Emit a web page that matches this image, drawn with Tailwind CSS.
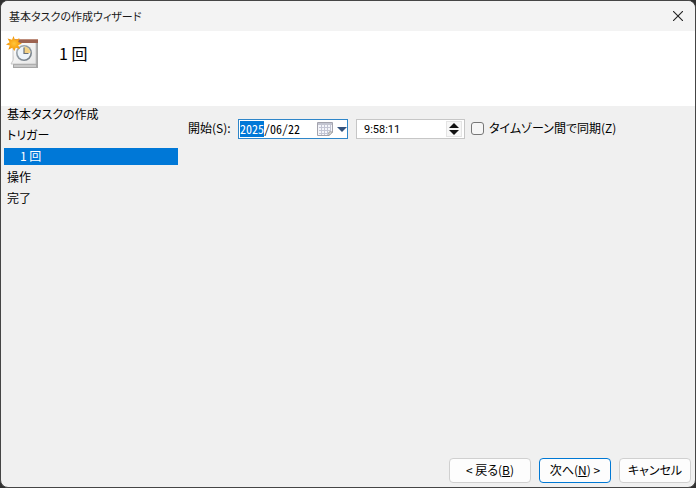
<!DOCTYPE html>
<html lang="ja">
<head>
    <meta charset="UTF-8">
    <meta name="viewport" content="width=device-width, initial-scale=1.0">
    <title>基本タスクの作成ウィザード</title>
    <script src="https://cdn.jsdelivr.net/npm/@tailwindcss/browser@4"></script>
</head>
<body class="h-screen overflow-hidden bg-[#303030] font-['Noto_Sans_CJK_JP',sans-serif] text-[12px] leading-5 text-black [font-feature-settings:'palt']">

    <div class="flex h-full flex-col overflow-hidden rounded-lg border border-[#454545] bg-[#f0f0f0]">
        <!-- Title bar -->
        <header class="flex h-[30px] shrink-0 items-center justify-between bg-[#f3f3f3] pr-3 pl-2">
            <h1 class="text-[11px] text-[#1a1a1a]">基本タスクの作成ウィザード</h1>
            <button type="button" aria-label="閉じる" class="flex size-[10px] items-center justify-center">
                <svg class="size-[10px]" viewBox="0 0 10 10" fill="none" stroke="#222" stroke-width="1.1"><path d="M0 0L10 10M10 0L0 10"/></svg>
            </button>
        </header>

        <!-- Page heading -->
        <div class="flex h-[75px] shrink-0 items-start gap-5 bg-white px-1 pt-1">
            <svg class="size-[34px] shrink-0" viewBox="0 0 34 34" fill="none">
                <defs>
                    <linearGradient id="paper" x1="0" y1="0" x2="1" y2="1"><stop stop-color="#ffffff"/><stop offset="1" stop-color="#e6e6e6"/></linearGradient>
                    <linearGradient id="rim" x1="0" y1="0" x2="1" y2="1"><stop stop-color="#aab3bb"/><stop offset="1" stop-color="#6c7780"/></linearGradient>
                    <radialGradient id="sun"><stop stop-color="#ffc63c"/><stop offset=".5" stop-color="#fbab1a"/><stop offset="1" stop-color="#f0920a"/></radialGradient>
                </defs>
                <path d="M8 5H33V33H8Z" fill="#a6a6a6"/>
                <path d="M9 30H31V32H9Z" fill="#c9c9c9"/>
                <path d="M8 5H31V29H6Q9 26 8 20Z" fill="url(#paper)" stroke="#bdbdbd" stroke-width=".8"/>
                <path d="M9 4H33V8H9Z" fill="#9c6250"/>
                <path d="M9 4H33V5H9Z" fill="#bd8d7c"/>
                <circle cx="19" cy="18" r="8" fill="url(#rim)"/>
                <circle cx="19" cy="18" r="6.4" fill="#edf4fa"/>
                <path d="M19 18V11.6A6.4 6.4 0 0 1 25.4 18Z" fill="#f3d184"/>
                <path d="M19 12.5V18.5H23.5" stroke="#66707a" stroke-width="1.2"/>
                <path d="M8.5 1L10 5L14.5 3.2L13.2 7L17 8.5L13.2 10.2L15 14L10.8 12.8L9.3 16L7.3 12.8L3.3 14.8L4.8 10.6L1 9.5L4.6 7.3L2.6 3.4L7 4.8Z" fill="url(#sun)"/>
            </svg>
            <h2 class="pt-[6px] text-[16px] leading-6">1 回</h2>
        </div>

        <div class="flex min-h-0 flex-1">
            <!-- Wizard steps -->
            <nav class="w-[177px] shrink-0 pl-[3px]">
                <ul class="space-y-1 leading-[15px]">
                    <li class="pb-0.5 pl-[3px]">基本タスクの作成</li>
                    <li class="pb-0.5 pl-[3px]">トリガー</li>
                    <li class="bg-[#0078d7] pb-0.5 pl-4 text-white" aria-current="step">1 回</li>
                    <li class="pb-0.5 pl-[3px]">操作</li>
                    <li class="pb-0.5 pl-[3px]">完了</li>
                </ul>
            </nav>

            <!-- Start time -->
            <main class="flex flex-1 items-start pt-3 pl-[10px]">
                <label for="startDate" class="w-[50px] shrink-0">開始(S):</label>
                <div class="mt-[1px] flex h-5 w-[110px] shrink-0 items-center border border-[#2f86c9] bg-white">
                    <input id="startDate" type="text" value="2025/06/22" class="w-[78px] pl-[1px] text-[12px] leading-4 outline-none [font-feature-settings:'hwid'] selection:bg-[#0078d7] selection:text-white">
                    <button type="button" aria-label="カレンダー" class="flex items-center gap-1">
                        <svg class="h-[14px] w-4" viewBox="0 0 16 14" fill="none">
                            <path d="M.5 .5H15.5V10L12 13.5H.5Z" fill="#f4f5fa" stroke="#a3a3ad"/>
                            <path d="M1 2H15" stroke="#c2c4d0" stroke-width="2"/>
                            <path d="M2 5.5H14M2 8.5H14M2 11.5H12M4.5 3V13M7.5 3V13M10.5 3V13M13.5 3V10" stroke="#c3c5d4"/>
                            <path d="M12 13.5V10H15.5Z" fill="#fff" stroke="#999"/>
                        </svg>
                        <svg class="h-[5px] w-[10px]" viewBox="0 0 10 5"><path d="M0 0H10L5 5Z" fill="#33527d"/></svg>
                    </button>
                </div>
                <div class="mt-[1px] ml-2 flex h-5 w-[109px] shrink-0 items-center border border-[#c6c6c6] bg-white">
                    <input id="startTime" type="text" value="9:58:11" aria-label="開始時刻" class="w-[89px] pt-[1px] pl-[7px] font-['Roboto',sans-serif] text-[11px] leading-4 outline-none">
                    <div class="flex flex-col">
                        <button type="button" aria-label="増やす" class="flex h-2 w-4 items-center justify-center border border-b-0 border-[#e4e4e4] bg-[#f7f7f7]">
                            <svg class="h-[5px] w-[10px]" viewBox="0 0 10 5"><path d="M0 5H10L5 0Z" fill="#111"/></svg>
                        </button>
                        <button type="button" aria-label="減らす" class="flex h-2 w-4 items-center justify-center border border-t-0 border-[#e4e4e4] bg-[#f7f7f7]">
                            <svg class="h-[5px] w-[10px]" viewBox="0 0 10 5"><path d="M0 0H10L5 5Z" fill="#111"/></svg>
                        </button>
                    </div>
                </div>
                <div class="ml-[6px] flex items-center gap-[5px]">
                    <input id="syncZones" type="checkbox" class="size-[13px] shrink-0 appearance-none rounded-[3px] border border-[#777] bg-[#f6f6f6] checked:bg-[#0078d7]">
                    <label for="syncZones" class="whitespace-nowrap">タイムゾーン間で同期(Z)</label>
                </div>
            </main>
        </div>

        <!-- Wizard buttons -->
        <footer class="flex shrink-0 justify-end gap-2 pr-1 pb-1">
            <button type="button" class="h-[25px] w-[82px] rounded-[4px] border border-[#d0d0d0] bg-[#fdfdfd] pb-0.5">&lt; 戻る(<u>B</u>)</button>
            <button type="button" class="h-[25px] w-[72px] rounded-[4px] border border-[#0078d4] bg-[#fdfdfd] pb-0.5">次へ(<u>N</u>) &gt;</button>
            <button type="button" class="h-[25px] w-[72px] rounded-[4px] border border-[#d0d0d0] bg-[#fdfdfd] pb-0.5">キャンセル</button>
        </footer>
    </div>

    <script>
        // Put the focus on the year part of the date
        const startDate = document.getElementById('startDate');
        startDate.focus();
        startDate.setSelectionRange(0, 4);
    </script>
</body>
</html>
